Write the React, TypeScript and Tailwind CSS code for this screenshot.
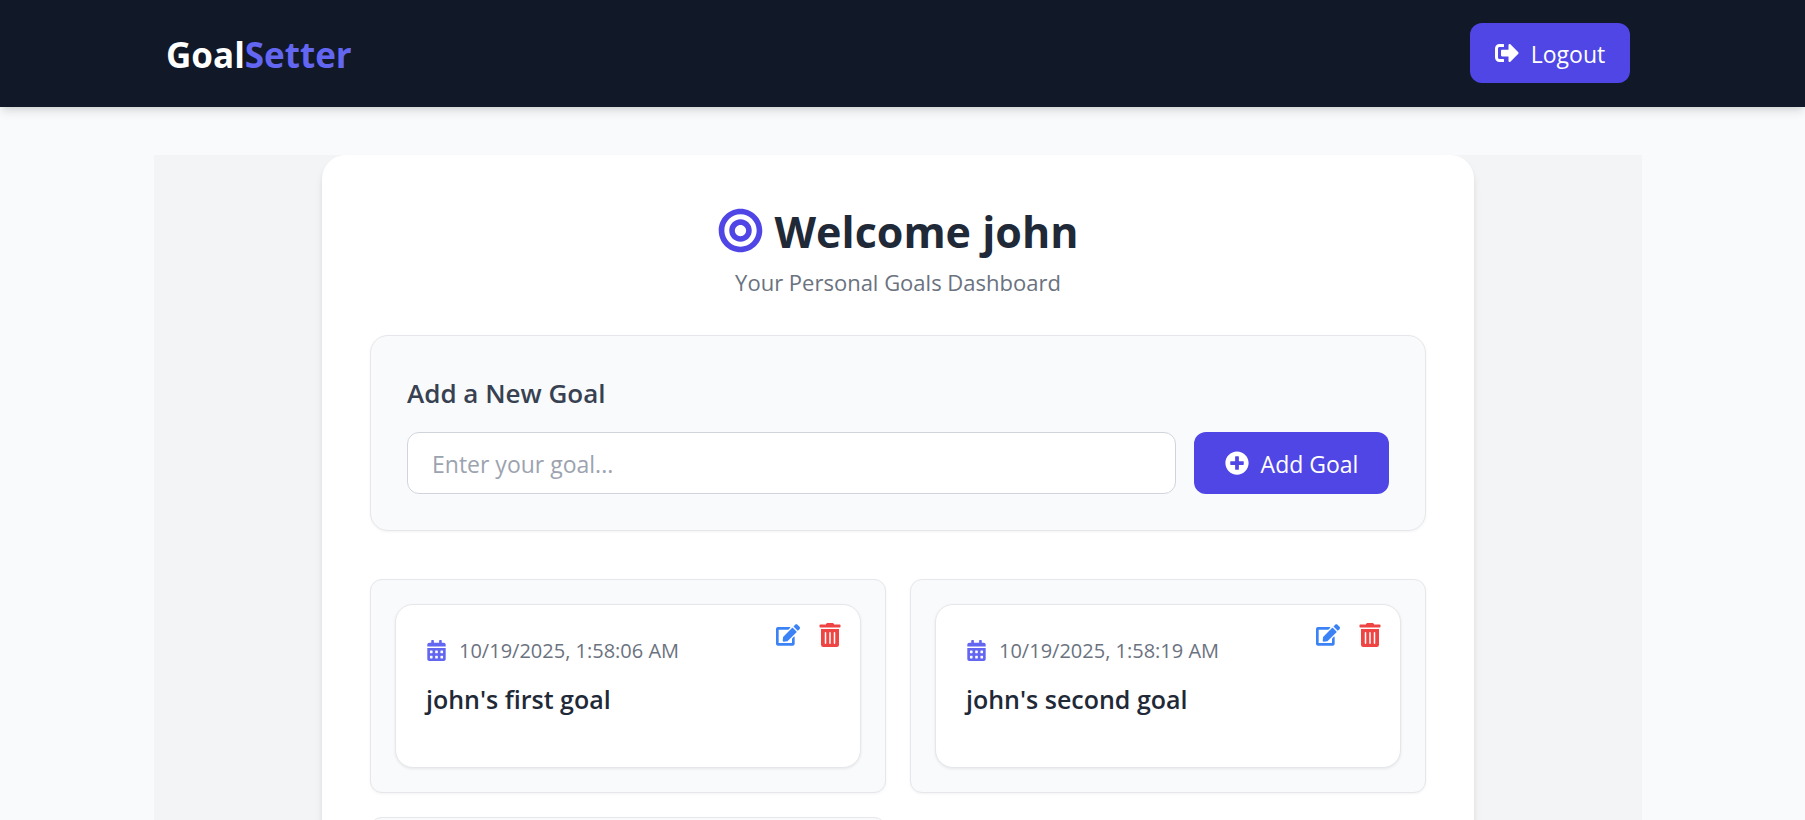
import { useState } from "react";
import type { FormEvent } from "react";
import {
  FaBullseye,
  FaCalendarAlt,
  FaEdit,
  FaPlusCircle,
  FaSignOutAlt,
  FaTrashAlt,
} from "react-icons/fa";

interface Goal {
  id: number;
  createdAt: string;
  text: string;
}

const goals: Goal[] = [
  { id: 1, createdAt: "10/19/2025, 1:58:06 AM", text: "john's first goal" },
  { id: 2, createdAt: "10/19/2025, 1:58:19 AM", text: "john's second goal" },
  { id: 3, createdAt: "", text: "" },
];

function Header() {
  return (
    <header className="relative bg-[#111827] pr-[9px] shadow-[0_6px_9px_-1px_rgba(0,0,0,0.1),0_3px_6px_-3px_rgba(0,0,0,0.1)]">
      <div className="mx-auto flex max-w-[1464px] items-center justify-between pt-[23px] pb-6">
        <a href="#" className="pt-1 text-[35px] leading-[56px] font-bold text-white">
          Goal<span className="text-[#6366f1]">Setter</span>
        </a>
        <button
          type="button"
          className="flex h-[60px] min-w-[160px] items-center justify-center gap-3 rounded-xl bg-[#4f46e5] px-6 text-[23px] text-white"
        >
          <FaSignOutAlt className="size-6" />
          <span className="pt-0.5">Logout</span>
        </button>
      </div>
    </header>
  );
}

function GoalForm() {
  const [text, setText] = useState("");
  const submit = (e: FormEvent) => {
    e.preventDefault();
    setText("");
  };
  return (
    <section className="rounded-[18px] border border-[#e5e7eb] bg-[#f9fafb] p-9 shadow-[0_1px_3px_rgba(0,0,0,0.05)]">
      <form onSubmit={submit}>
        <label
          htmlFor="goal"
          className="mb-[18px] block text-[26px] leading-[42px] font-semibold text-[#374151]"
        >
          Add a New Goal
        </label>
        <div className="flex gap-[18px]">
          <input
            id="goal"
            type="text"
            value={text}
            onChange={(e) => setText(e.target.value)}
            placeholder="Enter your goal..."
            className="h-[62px] min-w-0 flex-1 rounded-xl border border-[#d1d5db] bg-white px-6 pt-0.5 text-[23px] text-[#111827] placeholder:text-[#9ca3af]"
          />
          <button
            type="submit"
            className="flex h-[62px] min-w-[195px] items-center justify-center gap-3 rounded-xl bg-[#4f46e5] px-6 text-[23px] text-white"
          >
            <FaPlusCircle className="size-6" />
            <span className="pt-0.5">Add Goal</span>
          </button>
        </div>
      </form>
    </section>
  );
}

function GoalCard({ goal }: { goal: Goal }) {
  return (
    <li className="rounded-xl border border-[#e5e7eb] bg-[#f9fafb] p-6 shadow-[0_1px_3px_rgba(0,0,0,0.05)]">
      <article className="relative min-h-[164px] rounded-[18px] border border-[#e5e7eb] bg-white p-[30px] shadow-[0_1px_3px_rgba(0,0,0,0.08)]">
        <div className="absolute top-[18px] right-[18px] flex gap-[18px]">
          <button type="button" aria-label="Edit" className="text-[#3b82f6]">
            <FaEdit className="size-6" />
          </button>
          <button type="button" aria-label="Delete" className="text-[#ef4444]">
            <FaTrashAlt className="size-6" />
          </button>
        </div>
        <p className="flex h-[30px] items-center gap-3 text-[20px] leading-7 text-[#6b7280]">
          <FaCalendarAlt className="size-[21px] text-[#6366f1]" />
          <time className="pt-0.5">{goal.createdAt}</time>
        </p>
        <h2 className="mt-3 text-[25px] leading-[44px] font-semibold text-[#1f2937]">
          {goal.text}
        </h2>
      </article>
    </li>
  );
}

export default function App() {
  return (
    <div className="min-h-screen bg-[#f9fafb] font-['Segoe_UI','Open_Sans',sans-serif]">
      <Header />
      <div className="pt-12 pr-[9px]">
        <main className="mx-auto max-w-[1488px] bg-[#f3f4f6]">
          <div className="mx-auto max-w-[1152px] rounded-3xl bg-white p-12 shadow-[0_6px_9px_-1px_rgba(0,0,0,0.1),0_3px_6px_-3px_rgba(0,0,0,0.1)]">
            <div className="mb-9 text-center">
              <h1 className="flex h-[54px] items-center justify-center gap-3 text-[43px] leading-[50px] font-bold text-[#1f2937]">
                <FaBullseye className="size-[45px] text-[#4f46e5]" />
                <span className="pt-1">Welcome john</span>
              </h1>
              <p className="mt-2 text-[22px] leading-[34px] text-[#6b7280]">
                Your Personal Goals Dashboard
              </p>
            </div>
            <GoalForm />
            <ul className="mt-12 grid grid-cols-2 gap-6">
              {goals.map((goal) => (
                <GoalCard key={goal.id} goal={goal} />
              ))}
            </ul>
          </div>
        </main>
      </div>
    </div>
  );
}
